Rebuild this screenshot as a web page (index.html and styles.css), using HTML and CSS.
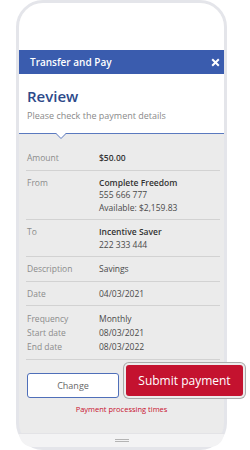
FILE: index.html
```html
<!DOCTYPE HTML>
<html>
  <head>
    <title>Transfer and Pay</title>
    <meta charset="utf-8" />
    <link rel="stylesheet" href="styles.css">
  </head>
  <body>
    <div class='phone'>
      <div class='status'></div>
      <header class='titlebar'>
        <span class='title'>Transfer and Pay</span>
        <svg class='close' width="9" height="9" viewBox="0 0 9 9">
          <path d="M1.2 1.2L7.8 7.8M7.8 1.2L1.2 7.8" stroke="#fff" stroke-width="2" fill="none" />
        </svg>
      </header>
      <section class='intro'>
        <h1>Review</h1>
        <p>Please check the payment details</p>
        <svg class='notch' width="10" height="7" viewBox="0 0 10 7">
          <polygon points="0,0 10,0 5,5.5" fill="#fff" />
          <polyline points="0,0.5 5,5.5 10,0.5" stroke="#5a79bf" stroke-width="1" fill="none" />
        </svg>
      </section>
      <div class='details'>
        <div class='row'>
          <div class='label'>Amount</div>
          <div class='value'><b>$50.00</b></div>
        </div>
        <div class='row'>
          <div class='label'>From</div>
          <div class='value'>
            <b>Complete Freedom</b>
            <div>555 666 777</div>
            <div>Available: $2,159.83</div>
          </div>
        </div>
        <div class='row'>
          <div class='label'>To</div>
          <div class='value'>
            <b>Incentive Saver</b>
            <div>222 333 444</div>
          </div>
        </div>
        <div class='row'>
          <div class='label'>Description</div>
          <div class='value'>Savings</div>
        </div>
        <div class='row'>
          <div class='label'>Date</div>
          <div class='value'>04/03/2021</div>
        </div>
        <div class='row schedule'>
          <div class='line'>
            <div class='label'>Frequency</div>
            <div class='value'>Monthly</div>
          </div>
          <div class='line'>
            <div class='label'>Start date</div>
            <div class='value'>08/03/2021</div>
          </div>
          <div class='line'>
            <div class='label'>End date</div>
            <div class='value'>08/03/2022</div>
          </div>
        </div>
      </div>
      <div class='actions'>
        <button class='change'>Change</button>
        <button class='submit'>Submit payment</button>
      </div>
      <a class='times'>Payment processing times</a>
      <div class='spacer'></div>
      <footer class='home'><span class='handle'></span></footer>
    </div>
  </body>
</html>
```

FILE: styles.css
```css
body {
  margin: 0;
  background: #fff;
  font-family: "Open Sans", "Noto Sans", sans-serif;
}
.phone {
  box-sizing: border-box;
  margin-left: 16px;
  width: 211px;
  height: 450px;
  border: 3px solid #e4e5ea;
  border-radius: 27px;
  background: #ebebeb;
  display: flex;
  flex-direction: column;
}
.status {
  height: 47px;
  background: #fff;
  border-radius: 24px 24px 0 0;
}
.titlebar {
  height: 24px;
  background: #3a5cae;
  color: #fff;
  display: flex;
  align-items: center;
  padding: 0 4px 0 11px;
}
.title {
  flex: 1;
  font-size: 10px;
  font-weight: 600;
}
.close {
  display: block;
}
.intro {
  position: relative;
  height: 59px;
  background: #fff;
  padding-left: 8px;
  border-bottom: 1px solid #5a79bf;
}
.intro h1 {
  margin: 0;
  padding-top: 11px;
  font-size: 15px;
  line-height: 22px;
  font-weight: 600;
  color: #2d4a8a;
}
.intro p {
  margin: 3px 0 0;
  font-size: 9px;
  line-height: 12px;
  color: #8a8a8a;
}
.notch {
  position: absolute;
  left: 37px;
  top: 100%;
  display: block;
}
.details {
  padding: 12px 4px 0 7px;
}
.row {
  display: flex;
  padding: 6px 0 5px 1px;
  border-bottom: 1px solid #d2d2d2;
  font-size: 8.5px;
  line-height: 12.5px;
  color: #4a4a4a;
}
.row b {
  font-weight: 600;
  color: #333;
}
.label {
  width: 72px;
  color: #8c8c8c;
}
.value {
  flex: 1;
}
.schedule {
  flex-direction: column;
  line-height: 14px;
}
.line {
  display: flex;
}
.actions {
  display: flex;
  align-items: flex-end;
  padding: 5px 0 0 8px;
}
.actions button {
  flex-shrink: 0;
  font-family: inherit;
  border-radius: 3px;
  cursor: pointer;
}
.change {
  width: 92px;
  height: 25px;
  background: #fff;
  border: 1px solid #4f6fb9;
  color: #666;
  font-size: 9px;
}
.submit {
  width: 117px;
  height: 31px;
  margin: 0 0 2px 7px;
  background: #c4122f;
  border: none;
  color: #fff;
  font-size: 12px;
  box-shadow: 0 0 0 2px #ececec, 0 0 0 3px #ababab;
}
.times {
  margin-top: 5px;
  text-align: center;
  font-size: 7.5px;
  line-height: 12px;
  color: #c8102e;
}
.spacer {
  flex: 1;
}
.home {
  box-sizing: border-box;
  height: 14px;
  padding-top: 5px;
  background: #f3f3f4;
  border-top: 1px solid #e3e3e6;
  border-radius: 0 0 24px 24px;
  display: flex;
  justify-content: center;
}
.handle {
  width: 14px;
  height: 1px;
  border-top: 1px solid #b4b4b4;
  border-bottom: 1px solid #b4b4b4;
}
```
